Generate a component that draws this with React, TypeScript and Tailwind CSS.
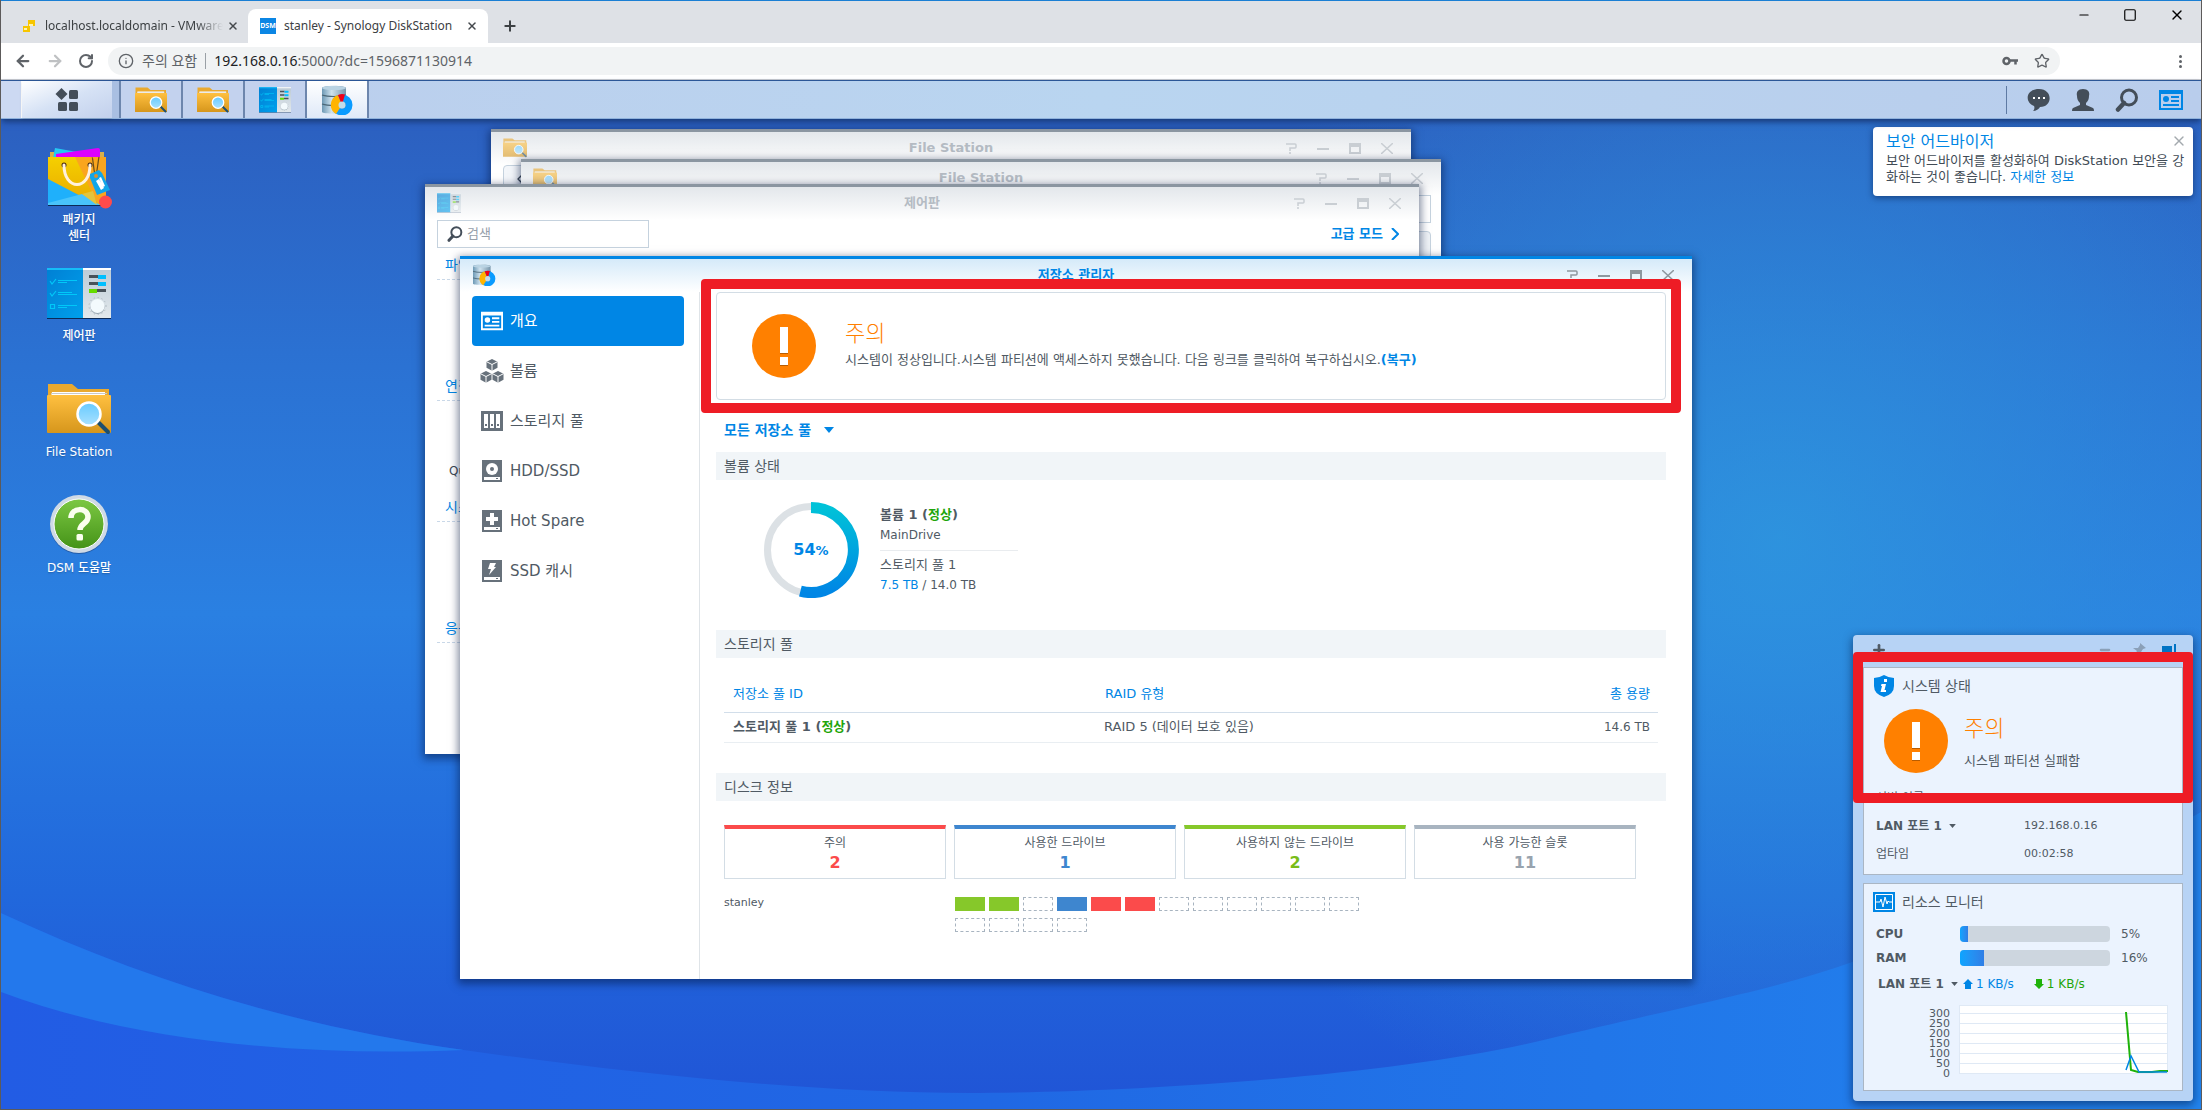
import type { ReactNode } from "react";
import { ArrowLeft, ArrowRight, ChevronLeft, Info, Minus, Plus, RotateCw, Square, Star, X } from "lucide-react";
import clsx from "clsx";

type IconProps = { className?: string };

function FolderIcon({ className }: IconProps) {
  return (
    <svg viewBox="0 0 64 52" className={className} aria-hidden="true">
      <defs>
        <linearGradient id="folder" x1="0" y1="0" x2="0" y2="1">
          <stop offset="0" stopColor="#ffc040" />
          <stop offset="1" stopColor="#d6961c" />
        </linearGradient>
        <linearGradient id="lens" x1="0" y1="0" x2="0" y2="1">
          <stop offset="0" stopColor="#66caff" />
          <stop offset="1" stopColor="#a9e1ff" />
        </linearGradient>
      </defs>
      <path d="M1 1h24l6 5h31v8H1z" fill="#e9a92f" />
      <path d="M5 9h53v5H4z" fill="#fff" />
      <path d="M4 10.500h56" stroke="#c9c9c9" strokeWidth="1" />
      <path d="M1 12h62a1 1 0 0 1 1 1v36a1 1 0 0 1-1 1H1a1 1 0 0 1-1-1V13a1 1 0 0 1 1-1z" fill="url(#folder)" />
      <path d="M52 40l9 9" stroke="#1d4f6f" strokeWidth="4" strokeLinecap="round" />
      <circle cx="42" cy="31" r="11.500" fill="url(#lens)" stroke="#fff" strokeWidth="2.500" />
    </svg>
  );
}

function ControlPanelIcon({ className }: IconProps) {
  return (
    <svg viewBox="0 0 64 51" className={className} aria-hidden="true">
      <defs>
        <linearGradient id="cpLeft" x1="0" y1="0" x2="1" y2="1">
          <stop offset="0" stopColor="#0080d4" />
          <stop offset="1" stopColor="#00a0ec" />
        </linearGradient>
        <linearGradient id="cpRight" x1="0" y1="0" x2="0" y2="1">
          <stop offset="0" stopColor="#bccbd6" />
          <stop offset="1" stopColor="#e2e8ec" />
        </linearGradient>
      </defs>
      <path d="M0 50h64v1H0z" fill="#0b2a57" />
      <path d="M0 0h36v50H0z" fill="url(#cpLeft)" />
      <path d="M0 0h36v2H0z" fill="#15bdf8" />
      <path d="M36 0h28v50H36z" fill="url(#cpRight)" />
      <path d="M36 0h28v2H36z" fill="#fff" />
      <path d="M3 13l2 3 4-5M3 25l2 3 4-5M3.500 36.500h4v4h-4zM11 12.500h19M11 14.500h9M11 24.500h14M11 26.500h19M11 37.500h19M11 39.500h9" stroke="#00c8f8" strokeWidth="1.200" fill="none" />
      <path d="M42 7h9v3h-9zM42 14h9v3h-9zM50 21h9v3h-9z" fill="#48525a" />
      <path d="M51 7h8v4h-8zM51 14h8v4h-8z" fill="#00bfff" />
      <path d="M42 21h8v4h-8z" fill="#65dc00" />
      <circle cx="50.500" cy="38" r="8.500" fill="none" stroke="#a8b4bc" strokeWidth="1" strokeDasharray="1 3" />
      <circle cx="50.500" cy="39" r="7" fill="#9aa8b2" />
      <circle cx="50.500" cy="38" r="7" fill="#f3fafd" />
    </svg>
  );
}

function StorageIcon({ className }: IconProps) {
  return (
    <svg viewBox="0 0 32 30" className={className} aria-hidden="true">
      <defs>
        <linearGradient id="cyl" x1="0" y1="0" x2="1" y2="0">
          <stop offset="0" stopColor="#6d99b5" />
          <stop offset="0.400" stopColor="#cfe2ee" />
          <stop offset="1" stopColor="#7795aa" />
        </linearGradient>
      </defs>
      <path d="M1 3c0-3 24-3 24 0v24c0 2-24 2-24 0z" fill="url(#cyl)" />
      <ellipse cx="13" cy="3" rx="12" ry="2" fill="#b9d3e3" />
      <path d="M1 10c6 2 18 2 24 0M1 19c6 2 18 2 24 0" stroke="#4c6878" strokeWidth="1.200" fill="none" />
      <circle cx="21" cy="20" r="7" fill="none" stroke="#0a9bff" strokeWidth="7" />
      <path d="M21 20L17 10A10.500 10.500 0 0 0 15 29z" fill="#ffb400" />
      <path d="M21 20l-4-10a10 10 0 0 1 7-.5z" fill="#f00018" />
      <circle cx="21" cy="20" r="3.500" fill="#c3dcea" />
    </svg>
  );
}

function PackageIcon({ className }: IconProps) {
  return (
    <svg viewBox="0 0 66 64" className={className} aria-hidden="true">
      <defs>
        <linearGradient id="bag" x1="0" y1="0" x2="0" y2="1">
          <stop offset="0" stopColor="#f5d000" />
          <stop offset="1" stopColor="#e8a800" />
        </linearGradient>
      </defs>
      <path d="M2 60h58v1H2z" fill="#0b2a57" />
      <path d="M4 7h4v5H4zM54 7h4v5h-4z" fill="#d8b04a" />
      <path d="M9 3l22 4-4 6H7z" fill="#25c9f2" />
      <path d="M10 9l42-6q2 0 2 2v10H10z" fill="#dc00ff" />
      <path d="M2 12h58v47a1 1 0 0 1-1 1H3a1 1 0 0 1-1-1z" fill="url(#bag)" />
      <path d="M29 12h31v48h-8z" fill="#faa51e" />
      <path d="M2 34l48 25v1H2z" fill="#1fb0fb" />
      <path d="M2 60v-2l34-9 18 11z" fill="#49c4fb" />
      <path d="M36 49l11-3 4 14z" fill="#e3c43c" />
      <circle cx="18" cy="20" r="2.500" fill="#4a2c10" />
      <circle cx="44" cy="20" r="2.500" fill="#4a2c10" />
      <path d="M18 20c0 26 26 26 26 0" stroke="#fff1de" strokeWidth="3" fill="none" strokeLinecap="round" />
      <path d="M49 30c-2-9-2-18-3-17M50 30c2-8 2-14 3-18" stroke="#6a4c18" strokeWidth="1.200" fill="none" />
      <path d="M44 29l9-4 3 3 8 17-13 5-7-17z" fill="#12a5e8" />
      <circle cx="50" cy="31" r="2" fill="#d98f2e" />
      <path d="M50 36l3-2 5 9-3 2zM53 33l2-1 4 9-2 1z" fill="#fff" />
      <circle cx="59.500" cy="57" r="6.500" fill="#ff4b4b" />
    </svg>
  );
}

function HelpIcon({ className }: IconProps) {
  return (
    <svg viewBox="0 0 60 62" className={className} aria-hidden="true">
      <defs>
        <linearGradient id="help" x1="0" y1="0" x2="0" y2="1">
          <stop offset="0" stopColor="#7cc843" />
          <stop offset="1" stopColor="#459318" />
        </linearGradient>
      </defs>
      <circle cx="30" cy="31" r="29" fill="#1c3d78" opacity="0.500" />
      <circle cx="30" cy="30" r="29" fill="#cfdae6" />
      <circle cx="30" cy="30" r="25" fill="url(#help)" stroke="#fff" strokeWidth="1" />
      <path d="M22 24c0-11 17-11 17-1 0 7-8 6-8 13" stroke="#fbffee" strokeWidth="5.500" fill="none" />
      <rect x="27.500" y="40" width="6.500" height="6.500" rx="1.500" fill="#fbffee" />
    </svg>
  );
}

function WarningIcon() {
  return (
    <svg viewBox="0 0 64 64" className="size-16 shrink-0" aria-hidden="true">
      <circle cx="32" cy="32" r="32" fill="#ff8000" />
      <path d="M28 14h8v26h-8zM28 44h8v8h-8z" fill="#b85c00" />
      <path d="M28 13h8v26h-8zM28 43h8v8h-8z" fill="#fff" />
    </svg>
  );
}

function SearchGlyph({ className }: IconProps) {
  return (
    <svg viewBox="0 0 24 24" className={className} fill="none" aria-hidden="true">
      <circle cx="14" cy="9.500" r="7.500" stroke="#444e59" strokeWidth="3" />
      <path d="M9 15l-6 6.500" stroke="#444e59" strokeWidth="4.500" strokeLinecap="round" />
    </svg>
  );
}

function WidgetGlyph({ className }: IconProps) {
  return (
    <svg viewBox="0 0 24 20" className={className} aria-hidden="true">
      <path fillRule="evenodd" fill="currentColor" d="M0 0h24v20H0zM2 4v14h20V4z" />
      <circle cx="7" cy="9" r="3" fill="currentColor" />
      <path d="M12 6h8v2h-8zM12 10h8v2h-8zM4 14h16v2H4z" fill="currentColor" />
    </svg>
  );
}

function Caret({ className }: IconProps) {
  return (
    <svg viewBox="0 0 10 6" className={className} aria-hidden="true">
      <path d="M0 0h10L5 6z" fill="currentColor" />
    </svg>
  );
}

/* ---------- browser ---------- */

function BrowserChrome() {
  return (
    <header className="font-['Noto_Sans','Noto_Sans_CJK_KR',sans-serif] text-xs text-[#3c4043]">
      <div className="flex h-[43px] items-end border-t border-[#1a7fd4] bg-[#dee1e6]">
        <div className="flex h-[34px] w-[247px] items-center pl-[22px]">
          <svg viewBox="0 0 12 12" className="size-3 shrink-0" aria-hidden="true">
            <path d="M5 0h7v6H5zM0 6h7v6H0z" fill="#f7c600" />
            <path d="M6 4h4v2H6zM1 8h3v2H1z" fill="#fff3b0" />
          </svg>
          <span className="ml-[10px] w-[178px] mask-r-from-85% whitespace-nowrap">localhost.localdomain - VMware</span>
          <button className="ml-1 text-[#45494d]" aria-label="탭 닫기"><X className="size-3" strokeWidth={3} /></button>
        </div>
        <div className="flex h-[34px] w-60 items-center rounded-t-lg bg-white pl-3">
          <span className="flex h-4 w-4 items-center justify-center bg-[#0b86e4] text-[7px] font-bold text-white">DSM</span>
          <span className="ml-2 w-[176px] whitespace-nowrap">stanley - Synology DiskStation</span>
          <button className="ml-[6px] text-[#45494d]" aria-label="탭 닫기"><X className="size-3" strokeWidth={3} /></button>
        </div>
        <button className="mb-[9px] ml-[14px]" aria-label="새 탭"><Plus className="size-4" strokeWidth={3} /></button>
        <div className="mb-5 ml-auto flex items-center gap-8 pr-4 text-black">
          <button aria-label="최소화"><Minus className="size-[14px]" /></button>
          <button aria-label="최대화"><Square className="size-[14px]" /></button>
          <button aria-label="닫기"><X className="size-4" strokeWidth={2} /></button>
        </div>
      </div>
      <div className="flex h-[37px] items-center border-b border-[#c8cacd] bg-white pr-[17px] pl-[13px]">
        <button aria-label="뒤로"><ArrowLeft className="size-[18px] text-[#5f6368]" strokeWidth={3} /></button>
        <button className="ml-[14px]" aria-label="앞으로"><ArrowRight className="size-[18px] text-[#bfc1c3]" strokeWidth={3} /></button>
        <button className="ml-[14px]" aria-label="새로고침"><RotateCw className="size-4 text-[#5f6368]" strokeWidth={3} /></button>
        <div className="mr-[116px] ml-[14px] flex h-7 flex-1 items-center rounded-full bg-[#f1f3f4] pr-[10px] pl-[10px] text-sm text-[#5f6368]">
          <Info className="size-4" strokeWidth={2} />
          <span className="ml-2">주의 요함</span>
          <span className="mx-2 h-4 w-px bg-[#9aa0a6]" />
          <span><span className="text-[#202124]">192.168.0.16</span>:5000/?dc=1596871130914</span>
          <svg viewBox="0 0 16 10" className="ml-auto h-[10px] w-4" fill="none" stroke="#5f6368" aria-hidden="true">
            <circle cx="4.500" cy="5" r="3" strokeWidth="2.500" />
            <path d="M8 4.500h8M13.500 4v4.500" strokeWidth="2.500" />
          </svg>
          <Star className="ml-4 size-4" strokeWidth={2} />
        </div>
        <button className="flex w-2 flex-col items-center gap-[2px]" aria-label="메뉴">
          <span className="size-[3px] rounded-full bg-[#5f6368]" />
          <span className="size-[3px] rounded-full bg-[#5f6368]" />
          <span className="size-[3px] rounded-full bg-[#5f6368]" />
        </button>
      </div>
    </header>
  );
}

function TaskButton({ active, label, children }: { active?: boolean; label: string; children: ReactNode }) {
  return (
    <button
      aria-label={label}
      className={clsx(
        "flex h-full w-[62px] items-center justify-center border-r-2 border-[#6d86ad]",
        active ? "bg-gradient-to-b from-white to-[#dfe9f8]" : "bg-[#c3d2ee]",
      )}
    >
      {children}
    </button>
  );
}

function Taskbar() {
  return (
    <nav className="relative z-10 flex h-[39px] items-center border-t border-b border-t-[#2c5797] border-b-[#8fb2dc] bg-gradient-to-r from-[#bccdec] via-[#b9d5f0] to-[#b9cdec] shadow-md shadow-[#1b3f80]">
      <div className="h-full w-[21px] border-r border-white bg-[#ccd9f2]" />
      <button className="flex h-full w-[90px] items-center justify-center bg-gradient-to-br from-white via-[#d6e2f5] to-[#c2d0ec] shadow" aria-label="메인 메뉴">
        <svg viewBox="0 0 24 24" className="size-6 text-[#444e59]" fill="currentColor" aria-hidden="true">
          <path d="M6.500 0l6 6-6 6-6-6z" />
          <rect x="14" y="2" width="9" height="9" rx="1.500" />
          <rect x="3" y="14" width="9" height="9" rx="1.500" />
          <rect x="14" y="14" width="9" height="9" rx="1.500" />
        </svg>
      </button>
      <div className="h-full w-[9px] border-r-2 border-[#6d86ad] bg-[#a9bfe2]" />
      <TaskButton label="File Station"><FolderIcon className="w-8" /></TaskButton>
      <TaskButton label="File Station"><FolderIcon className="w-8" /></TaskButton>
      <TaskButton label="제어판"><ControlPanelIcon className="h-7 w-8" /></TaskButton>
      <TaskButton label="저장소 관리자" active><StorageIcon className="h-[30px] w-8" /></TaskButton>
      <div className="ml-auto flex items-center gap-5 pr-[18px] text-[#444e59]">
        <span className="h-7 w-px bg-[#5f7aa3]" />
        <button aria-label="알림">
          <svg viewBox="0 0 24 24" className="size-6" aria-hidden="true">
            <path d="M12 1c14 0 14 18 1 18-1 2-4 4-7 4 1-1 2-3 1-5C-3 14-1 1 12 1z" fill="currentColor" />
            <path d="M6 9h2v2H6zM11 9h2v2h-2zM16 9h2v2h-2z" fill="#fff" />
          </svg>
        </button>
        <button aria-label="사용자">
          <svg viewBox="0 0 24 24" className="size-6" aria-hidden="true">
            <path d="M12 1c5 0 7 3 6 7 0 3-1 5-3 7v2l7 3q1 .5 1 3H1q0-2.500 1-3l7-3v-2c-2-2-3-4-3-7-1-4 1-7 6-7z" fill="currentColor" />
          </svg>
        </button>
        <button aria-label="검색"><SearchGlyph className="size-6" /></button>
        <button aria-label="위젯" className="text-[#0086e5]"><WidgetGlyph className="h-5 w-6" /></button>
      </div>
    </nav>
  );
}

/* ---------- desktop ---------- */

function Wallpaper() {
  return (
    <svg viewBox="0 0 2202 990" preserveAspectRatio="none" className="absolute inset-0 size-full" aria-hidden="true">
      <defs>
        <linearGradient id="sky" x1="0" y1="0" x2="0" y2="1">
          <stop offset="0" stopColor="#2c60c0" />
          <stop offset="0.250" stopColor="#2b72d3" />
          <stop offset="0.500" stopColor="#2a80e2" />
          <stop offset="0.780" stopColor="#2168dc" />
          <stop offset="1" stopColor="#2054d6" />
        </linearGradient>
        <radialGradient id="glow" gradientUnits="userSpaceOnUse" cx="1780" cy="420" r="640">
          <stop offset="0" stopColor="#2e98de" stopOpacity="0.800" />
          <stop offset="0.500" stopColor="#2e90dc" stopOpacity="0.450" />
          <stop offset="1" stopColor="#2e90dc" stopOpacity="0" />
        </radialGradient>
        <linearGradient id="swoop" x1="0" y1="0" x2="1" y2="0">
          <stop offset="0" stopColor="#225ce4" />
          <stop offset="0.450" stopColor="#2068e4" />
          <stop offset="1" stopColor="#2284ee" />
        </linearGradient>
      </defs>
      <rect width="2202" height="990" fill="url(#sky)" />
      <rect width="2202" height="990" fill="url(#glow)" />
      <path d="M0 794C150 864 300 908 463 931s350 43 506 43 420-16 575-53 230-50 309-78 230-80 349-150v297H0z" fill="url(#swoop)" />
      <path d="M0 794C150 864 300 908 463 931 300 938 130 922 0 873z" fill="#2378ec" />
    </svg>
  );
}

const shortcuts = [
  { label: "패키지 센터", icon: <PackageIcon className="h-16 w-[66px]" />, narrow: true },
  { label: "제어판", icon: <ControlPanelIcon className="w-16" /> },
  { label: "File Station", icon: <FolderIcon className="w-16" /> },
  { label: "DSM 도움말", icon: <HelpIcon className="w-[60px]" /> },
];

function Shortcuts() {
  return (
    <ul className="relative flex w-[156px] flex-col pt-[26px] text-xs leading-4 font-medium text-white">
      {shortcuts.map((s) => (
        <li key={s.label} className="flex h-[116px] flex-col items-center">
          <div className="flex h-16 items-center">{s.icon}</div>
          <span className={clsx("mt-[3px] text-center text-shadow-sm", s.narrow && "w-10")}>{s.label}</span>
        </li>
      ))}
    </ul>
  );
}

function WindowButtons({ active }: { active?: boolean }) {
  return (
    <div className={clsx("flex items-center gap-5 justify-self-end pr-[18px]", active ? "text-[#8e989f]" : "text-[#c9ced3]")}>
      <button aria-label="도움말">
        <svg viewBox="0 0 12 11" className="h-[11px] w-3" fill="none" stroke="currentColor" strokeWidth="1.500" aria-hidden="true">
          <path d="M1 1h9q1 0 1 1v2q0 1-1 1H5v3M5 9v2" />
        </svg>
      </button>
      <button aria-label="최소화">
        <svg viewBox="0 0 12 11" className="h-[11px] w-3" aria-hidden="true"><path d="M0 5h12v2H0z" fill="currentColor" /></svg>
      </button>
      <button aria-label="최대화">
        <svg viewBox="0 0 12 11" className="h-[11px] w-3" aria-hidden="true">
          <path fillRule="evenodd" d="M0 0h12v11H0zM2 4v5h8V4z" fill="currentColor" />
        </svg>
      </button>
      <button aria-label="닫기">
        <svg viewBox="0 0 12 11" className="h-[11px] w-3" stroke="currentColor" strokeWidth="1.500" aria-hidden="true">
          <path d="M0 0l12 11M12 0L0 11" />
        </svg>
      </button>
    </div>
  );
}

type WindowProps = { title: string; icon: ReactNode; active?: boolean; className: string; children?: ReactNode };

function AppWindow({ title, icon, active, className, children }: WindowProps) {
  return (
    <section
      className={clsx(
        "absolute flex flex-col border-t-[3px] bg-white shadow-[0_3px_8px_2px_rgba(0,20,60,0.5)]",
        active ? "border-[#0086e5]" : "border-[#8b96a1]",
        className,
      )}
    >
      <div
        className={clsx(
          "grid h-[33px] shrink-0 grid-cols-[1fr_auto_1fr] items-center bg-gradient-to-b to-white pb-px",
          active ? "from-[#d5eaf9]" : "from-[#e3e7eb]",
        )}
      >
        <div className={clsx("pl-3", !active && "opacity-60")}>{icon}</div>
        <h2 className={clsx("text-[13px] leading-5 font-bold", active ? "text-[#0086e5]" : "text-[#b4bbc3]")}>{title}</h2>
        <WindowButtons active={active} />
      </div>
      {children}
    </section>
  );
}

function ControlPanelWindow() {
  return (
    <AppWindow title="제어판" icon={<ControlPanelIcon className="h-5 w-6" />} className="top-[65px] left-[424px] h-[570px] w-[994px]">
      <div className="flex items-center justify-between pr-5 pl-3">
        <label className="flex h-7 w-[212px] items-center border border-[#c5d2de] pl-[9px]">
          <SearchGlyph className="size-4" />
          <input className="ml-1 w-40 text-[13px] outline-none placeholder:text-[#96a0aa]" placeholder="검색" aria-label="검색" />
        </label>
        <a href="#advanced" className="flex items-center gap-2 text-[13px] font-bold text-[#0086e5]">
          고급 모드
          <svg viewBox="0 0 8 12" className="h-3 w-2" fill="none" stroke="currentColor" strokeWidth="2" aria-hidden="true">
            <path d="M1 0l6 6-6 6" />
          </svg>
        </a>
      </div>
      <div className="flex flex-col pt-[3px] pl-3 text-sm text-[#0086e5]">
        {["파일 공유", "연결", "시스템", "응용 프로그램"].map((name) => (
          <div key={name} className="h-[121px]">
            <h3 className="h-[29px] border-b border-dashed border-[#c9d8e8] pt-1 pl-2 leading-5">{name}</h3>
            {name === "연결" && <span className="block pt-[62px] pl-3 text-xs leading-4 text-[#414b55]">QuickConnect</span>}
          </div>
        ))}
      </div>
    </AppWindow>
  );
}

const menuIconProps = { viewBox: "0 0 22 22", className: "size-[22px]", "aria-hidden": true } as const;

const menu = [
  { label: "개요", icon: <WidgetGlyph className="h-5 w-[22px]" /> },
  {
    label: "볼륨",
    icon: (
      <svg viewBox="0 0 24 24" className="size-6 shrink-0" aria-hidden="true">
        {[
          [12, 0],
          [6, 12],
          [18, 12],
        ].map(([x, y]) => (
          <g key={x} transform={`translate(${x} ${y})`}>
            <path d="M0 0l5.500 2.700v6L0 11.700l-5.500-3v-6z" fill="#67717b" />
            <path d="M-5.500 2.700L0 5.500l5.500-2.800M0 5.500v6.500" stroke="#fff" strokeWidth="1" fill="none" />
          </g>
        ))}
      </svg>
    ),
  },
  {
    label: "스토리지 풀",
    icon: (
      <svg {...menuIconProps}>
        <path fill="#67717b" fillRule="evenodd" d="M0 1h22v20H0zM3 4v14h4V4zM9 4v14h4V4zM15 4v14h4V4z" />
        <path fill="#67717b" d="M4 14h2v2H4zM10 14h2v2h-2zM16 14h2v2h-2z" />
      </svg>
    ),
  },
  {
    label: "HDD/SSD",
    icon: (
      <svg {...menuIconProps}>
        <path fill="#67717b" d="M1 0h20v22H1z" />
        <circle cx="11" cy="9" r="6" fill="#fff" />
        <circle cx="11" cy="9" r="2" fill="#67717b" />
        <path fill="#fff" d="M3 17h16v3H3z" />
        <path fill="#67717b" d="M15 18h2v1h-2z" />
      </svg>
    ),
  },
  {
    label: "Hot Spare",
    icon: (
      <svg {...menuIconProps}>
        <path fill="#67717b" d="M1 0h20v22H1z" />
        <path fill="#fff" d="M9 3h4v4h4v4h-4v4H9v-4H5V7h4zM3 17h16v3H3z" />
        <path fill="#67717b" d="M15 18h2v1h-2z" />
      </svg>
    ),
  },
  {
    label: "SSD 캐시",
    icon: (
      <svg {...menuIconProps}>
        <path fill="#67717b" d="M1 0h20v22H1z" />
        <path fill="#fff" d="M9 3h6l-2 4h2l-7 8 2-6H7zM3 17h16v3H3z" />
        <path fill="#67717b" d="M15 18h2v1h-2z" />
      </svg>
    ),
  },
];

function SectionTitle({ children }: { children: ReactNode }) {
  return <h3 className="flex h-7 items-center bg-[#f1f5f8] pl-2 text-sm">{children}</h3>;
}

const diskStats = [
  { label: "주의", count: 2, border: "border-t-[#fb4b4b]", color: "text-[#fb4b4b]" },
  { label: "사용한 드라이브", count: 1, border: "border-t-[#3e86cf]", color: "text-[#3e86cf]" },
  { label: "사용하지 않는 드라이브", count: 2, border: "border-t-[#86c82a]", color: "text-[#79bd19]" },
  { label: "사용 가능한 슬롯", count: 11, border: "border-t-[#a8b4c0]", color: "text-[#98a3ae]" },
];

const slots = ["unused", "unused", "", "used", "warn", "warn", "", "", "", "", "", "", "", "", "", ""];

function StorageManager() {
  return (
    <AppWindow active title="저장소 관리자" icon={<StorageIcon className="h-[22px] w-6" />} className="top-[137px] left-[459px] h-[723px] w-[1232px]">
      <div className="flex min-h-0 flex-1 text-[#505a64]">
        <nav className="w-60 shrink-0 border-r border-[#dfe4e8] pt-1 pr-[15px] pl-3">
          {menu.map((item, i) => (
            <button
              key={item.label}
              className={clsx("flex h-[50px] w-full items-center rounded pl-[9px] text-[15px]", i === 0 && "bg-[#0086e5] text-white")}
            >
              <span className="flex w-[22px] justify-center">{item.icon}</span>
              <span className="ml-[7px]">{item.label}</span>
            </button>
          ))}
        </nav>
        <main className="min-w-0 flex-1 pr-[26px] pl-4 text-[13px]">
          <div className="flex h-[108px] items-center rounded border border-[#d3dde5] pl-[35px]">
            <WarningIcon />
            <div className="ml-[29px]">
              <h3 className="text-[22px] leading-7 font-light text-[#ff8000]">주의</h3>
              <p className="leading-6">
                시스템이 정상입니다.시스템 파티션에 액세스하지 못했습니다. 다음 링크를 클릭하여 복구하십시오.
                <a href="#repair" className="font-bold text-[#0086e5]">(복구)</a>
              </p>
            </div>
          </div>
          <div className="flex h-[52px] items-center pt-2 pl-2 text-[#0086e5]">
            <select className="appearance-none text-sm font-bold" aria-label="저장소 풀 선택">
              <option>모든 저장소 풀</option>
            </select>
            <Caret className="ml-3 h-[6px] w-[10px]" />
          </div>
          <SectionTitle>볼륨 상태</SectionTitle>
          <div className="flex h-[150px] items-start pt-[22px] pl-[47px]">
            <div className="relative flex size-24 items-center justify-center font-bold text-[#0086e5]">
              <svg viewBox="0 0 96 96" className="absolute inset-0" fill="none" aria-hidden="true">
                <defs>
                  <linearGradient id="usage" x1="0" y1="0" x2="0" y2="1">
                    <stop offset="0" stopColor="#00c2d8" />
                    <stop offset="1" stopColor="#0086e5" />
                  </linearGradient>
                </defs>
                <circle cx="48" cy="48" r="43.500" stroke="#dce1e5" strokeWidth="7" />
                <path d="M48 5.500A42.500 42.500 0 1 1 37.400 89.200" stroke="url(#usage)" strokeWidth="11" />
              </svg>
              <span className="relative text-base">54<span className="text-[13px]">%</span></span>
            </div>
            <div className="ml-[21px] w-[138px] pt-[3px] leading-5 whitespace-nowrap">
              <p className="font-bold">볼륨 1 (<span className="text-[#1fa50a]">정상</span>)</p>
              <p className="mb-[5px] text-xs leading-5">MainDrive</p>
              <p className="border-t border-[#e9ecef] pt-1">스토리지 풀 1</p>
              <p className="text-xs leading-5"><span className="text-[#0086e5]">7.5 TB</span> / 14.0 TB</p>
            </div>
          </div>
          <SectionTitle>스토리지 풀</SectionTitle>
          <div className="mt-[18px] mb-[30px] px-2">
            <table className="w-full table-fixed">
              <thead>
                <tr className="h-9 border-b border-[#d2deea] text-[#0086e5]">
                  <th className="w-[372px] pl-[9px] text-left font-normal">저장소 풀 ID</th>
                  <th className="pl-[9px] text-left font-normal">RAID 유형</th>
                  <th className="pr-2 text-right font-normal">총 용량</th>
                </tr>
              </thead>
              <tbody>
                <tr className="h-[30px] border-b border-[#e9eef2]">
                  <td className="pl-[9px] font-bold">스토리지 풀 1 (<span className="text-[#1fa50a]">정상</span>)</td>
                  <td className="pl-2">RAID 5 (데이터 보호 있음)</td>
                  <td className="pr-2 text-right text-xs">14.6 TB</td>
                </tr>
              </tbody>
            </table>
          </div>
          <SectionTitle>디스크 정보</SectionTitle>
          <div className="mt-6 grid grid-cols-4 gap-2 pr-[30px] pl-2">
            {diskStats.map((d) => (
              <div key={d.label} className={clsx("h-[54px] border border-t-4 border-[#d3dde5] pt-[6px] text-center", d.border)}>
                <p className="text-xs leading-4">{d.label}</p>
                <p className={clsx("text-base leading-6 font-bold", d.color)}>{d.count}</p>
              </div>
            ))}
          </div>
          <div className="mt-[18px] flex pl-2 text-[11px]">
            <span className="w-[231px] leading-3">stanley</span>
            <div className="grid grid-cols-[repeat(12,30px)] gap-x-1 gap-y-[7px]">
              {slots.map((s, i) => (
                <span
                  key={i}
                  className={clsx(
                    "h-[14px]",
                    s === "unused" && "bg-[#86c82a]",
                    s === "used" && "bg-[#3e86cf]",
                    s === "warn" && "bg-[#fb4b4b]",
                    !s && "border border-dashed border-[#a8b4c0]",
                  )}
                />
              ))}
            </div>
          </div>
        </main>
      </div>
      <div className="pointer-events-none absolute top-5 right-[11px] left-[241px] h-[134px] rounded border-10 border-[#ee1c25]" />
    </AppWindow>
  );
}

/* ---------- right side ---------- */

function Notification() {
  return (
    <aside className="absolute top-2 right-2 h-[69px] w-80 rounded-sm bg-white pt-1 pr-2 pl-[13px] text-[13px] leading-4 text-[#414b55] shadow-[0_2px_6px_rgba(0,20,60,0.5)]">
      <h2 className="text-base leading-[22px] text-[#0086e5]">보안 어드바이저</h2>
      <p className="break-all">
        보안 어드바이저를 활성화하여 DiskStation 보안을 강화하는 것이 좋습니다. <a href="#advisor" className="text-[#0086e5]">자세한 정보</a>
      </p>
      <button className="absolute top-[6px] right-[6px] text-[#a3a9ae]" aria-label="닫기"><X className="size-4" /></button>
    </aside>
  );
}

function Meter({ label, value, fill }: { label: string; value: string; fill: string }) {
  return (
    <div className="flex h-6 items-center pl-3">
      <span className="w-[84px] font-bold">{label}</span>
      <div className="h-4 w-[150px] overflow-hidden rounded-sm bg-[#cdd6df]">
        <div className={clsx("h-full bg-gradient-to-r from-[#0aa5ff] to-[#2f7ee6]", fill)} />
      </div>
      <span className="ml-[11px]">{value}</span>
    </div>
  );
}

function LanSelect({ id }: { id: string }) {
  return (
    <span className="flex items-center">
      <select id={id} className="appearance-none font-bold" aria-label="LAN 포트">
        <option>LAN 포트 1</option>
      </select>
      <Caret className="ml-[7px] h-1 w-[7px]" />
    </span>
  );
}

function TrafficChart() {
  return (
    <div className="mt-[11px] flex pr-[14px]">
      <div className="w-[86px] pt-1 text-right text-[11px] leading-[10px]">
        {[300, 250, 200, 150, 100, 50, 0].map((v) => (
          <div key={v}>{v}</div>
        ))}
      </div>
      <svg viewBox="0 0 209 69" className="ml-[9px] h-[69px] w-[209px]" fill="none" aria-hidden="true">
        <rect x="0.500" y="0.500" width="208" height="68" fill="#fff" stroke="#dfe9f5" />
        <path d="M0 8.500h209M0 18.500h209M0 28.500h209M0 38.500h209M0 48.500h209M0 58.500h209" stroke="#dfe9f5" />
        <path d="M167 7l5 58 7 2h14l8-1h8" stroke="#1fb20a" strokeWidth="2" />
        <path d="M167 65l5-14 8 16h28" stroke="#0086e5" strokeWidth="1.500" />
      </svg>
    </div>
  );
}

function WidgetPanel() {
  return (
    <aside className="absolute top-[516px] right-2 flex w-[340px] flex-col rounded bg-[#b7d3f5] px-[10px] pb-[10px] text-xs text-[#505a64] shadow-[0_3px_8px_1px_rgba(0,20,60,0.5)]">
      <div className="flex h-8 items-center pr-[7px] pb-[2px] pl-2">
        <button aria-label="위젯 추가"><Plus className="size-4" strokeWidth={4} /></button>
        <button className="ml-auto text-[#8ba0b8]" aria-label="최소화"><Minus className="size-[14px]" strokeWidth={4} /></button>
        <button className="ml-5 text-[#8ba0b8]" aria-label="고정">
          <svg viewBox="0 0 14 14" className="size-[14px]" aria-hidden="true">
            <path d="M8 0l6 5-3 1-2 3v4L6 10l-5 4 4-6-4-3h5l2-3z" fill="currentColor" />
          </svg>
        </button>
        <button className="ml-4 text-[#0073c4]" aria-label="도킹">
          <svg viewBox="0 0 14 12" className="h-3 w-[14px]" aria-hidden="true">
            <path d="M0 2h10v6H0zM12 0h2v12h-2z" fill="currentColor" />
          </svg>
        </button>
      </div>
      <section className="h-52 overflow-hidden border border-[#aab6c4] bg-[#ebf3fe]">
        <div className="flex h-9 items-center pl-[10px]">
          <svg viewBox="0 0 20 22" className="h-[22px] w-5" aria-hidden="true">
            <path d="M10 0q5 3 10 3v8q0 8-10 11Q0 19 0 11V3q5 0 10-3z" fill="#0086e5" />
            <path d="M10 4h3v3h-3zM7.500 9h4.500l-1.500 6h1.500v2H6.500l1.500-6H7z" fill="#fff" />
          </svg>
          <h3 className="ml-2 text-sm">시스템 상태</h3>
        </div>
        <div className="flex h-[80px] pt-[5px] pl-5">
          <WarningIcon />
          <div className="ml-4">
            <p className="text-[22px] leading-10 font-light text-[#ff8000]">주의</p>
            <p className="text-[13px] leading-6">시스템 파티션 실패함</p>
          </div>
        </div>
        <dl className="grid grid-cols-[148px_1fr] pl-3 text-[11px] leading-7">
          <dt className="text-xs leading-7">서버 이름</dt>
          <dd>stanley</dd>
          <dt className="flex text-xs"><LanSelect id="lan-status" /></dt>
          <dd>192.168.0.16</dd>
          <dt className="text-xs leading-7">업타임</dt>
          <dd>00:02:58</dd>
        </dl>
      </section>
      <section className="mt-2 h-[208px] border border-[#aab6c4] bg-[#ebf3fe]">
        <div className="flex h-[38px] items-center pb-[3px] pl-[9px]">
          <svg viewBox="0 0 22 20" className="h-5 w-[22px]" fill="none" stroke="#fff" aria-hidden="true">
            <path d="M0 0h22v20H0z" fill="#0086e5" stroke="none" />
            <path d="M2.500 2.500h17v15h-17zM3 10h4l1-3 2 8 2-10 2 7 1-3 1 1h3" />
          </svg>
          <h3 className="ml-[7px] text-sm">리소스 모니터</h3>
        </div>
        <Meter label="CPU" value="5%" fill="w-2" />
        <Meter label="RAM" value="16%" fill="w-6" />
        <div className="flex h-6 items-center pt-[3px] pl-[14px]">
          <LanSelect id="lan-traffic" />
          <svg viewBox="0 0 10 10" className="mr-[3px] ml-[5px] size-[10px]" aria-hidden="true"><path d="M5 0l5 5H8v5H2V5H0z" fill="#0086e5" /></svg>
          <span className="text-[#0086e5]">1 KB/s</span>
          <svg viewBox="0 0 10 10" className="mr-[3px] ml-5 size-[10px]" aria-hidden="true"><path d="M5 10l5-5H8V0H2v5H0z" fill="#1fb20a" /></svg>
          <span className="text-[#1fa50a]">1 KB/s</span>
        </div>
        <TrafficChart />
      </section>
      <div className="pointer-events-none absolute inset-x-0 top-[17px] h-[151px] rounded border-10 border-[#ee1c25]" />
    </aside>
  );
}

export default function App() {
  return (
    <div className="flex h-screen flex-col overflow-hidden border-r border-b border-l border-[#5c5a5a] bg-[#2a72d4] font-['DejaVu_Sans','Noto_Sans_CJK_KR',sans-serif]">
      <BrowserChrome />
      <Taskbar />
      <div className="relative flex-1 overflow-hidden">
        <Wallpaper />
        <Shortcuts />
        <AppWindow title="File Station" icon={<FolderIcon className="w-6" />} className="top-[10px] left-[490px] h-[500px] w-[920px]">
          <button className="ml-3 flex h-7 w-10 items-center rounded-sm border border-[#c5d2de] bg-[#f3f6fa] pl-2 text-[#414b55]" aria-label="이전">
            <ChevronLeft className="size-4" />
          </button>
        </AppWindow>
        <AppWindow title="File Station" icon={<FolderIcon className="w-6" />} className="top-[40px] left-[520px] h-[500px] w-[920px]">
          <div className="flex flex-col items-end gap-2 pr-[10px]">
            <input className="h-7 w-40 border border-[#c5d2de]" aria-label="파일 검색" />
            <button className="h-7 w-8 rounded-sm border border-[#c5d2de] bg-[#eef2f6] text-sm font-bold text-[#414b55]" aria-label="정렬">↓</button>
          </div>
        </AppWindow>
        <ControlPanelWindow />
        <StorageManager />
        <Notification />
        <WidgetPanel />
      </div>
    </div>
  );
}
